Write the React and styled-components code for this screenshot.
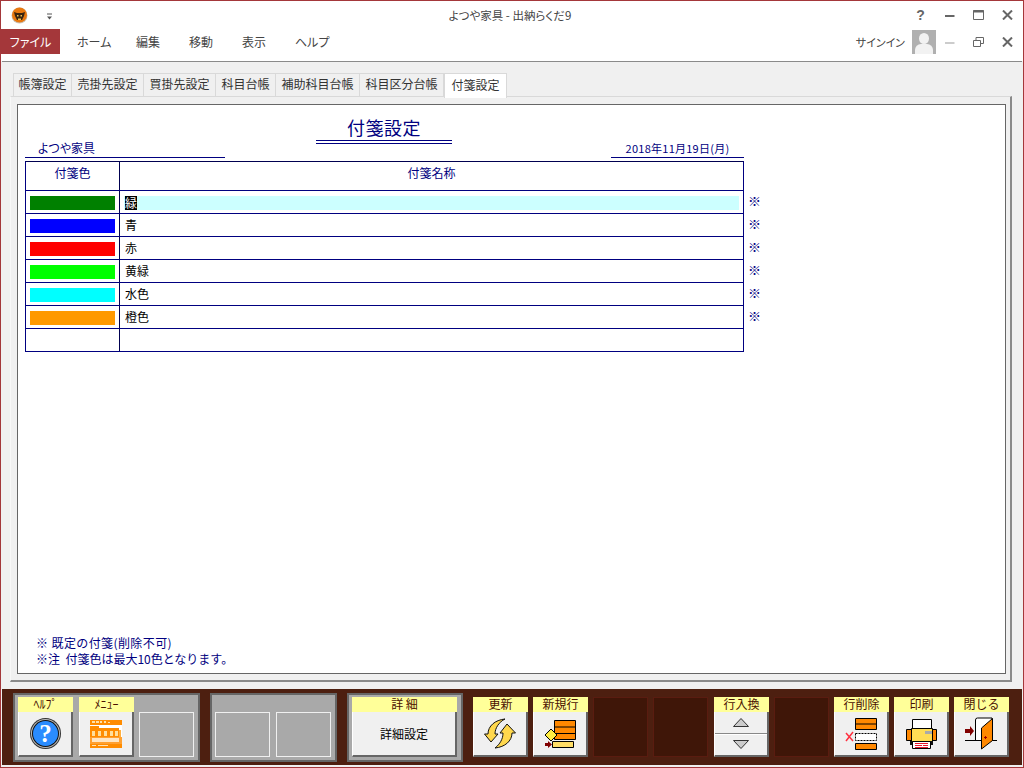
import styled, { createGlobalStyle } from "styled-components";

const GlobalStyle = createGlobalStyle`
  html, body {
    margin: 0;
    padding: 0;
    background: #fff;
  }
  body {
    font-family: "Noto Sans CJK JP", "Liberation Sans", sans-serif;
    font-size: 12px;
  }
  * {
    box-sizing: border-box;
  }
`;

const TABS = ["帳簿設定", "売掛先設定", "買掛先設定", "科目台帳", "補助科目台帳", "科目区分台帳", "付箋設定"];
const TAB_WIDTHS = [59, 72, 72, 60, 84, 84, 63];
const MENUS = ["ホーム", "編集", "移動", "表示", "ヘルプ"];
const ROWS = [
  { color: "#008000", name: "緑", selected: true },
  { color: "#0000ff", name: "青" },
  { color: "#ff0000", name: "赤" },
  { color: "#00ff00", name: "黄緑" },
  { color: "#00ffff", name: "水色" },
  { color: "#ff9900", name: "橙色" },
];

export default function App() {
  return (
    <Window>
      <GlobalStyle />
      <TitleBar>
        <TitleLeft>
          <Logo />
          <QuickMenu />
        </TitleLeft>
        <TitleText>よつや家具 - 出納らくだ9</TitleText>
        <Controls>
          <Help>?</Help>
          <ControlCell><MinimizeIcon color="#666" /></ControlCell>
          <ControlCell><MaximizeIcon /></ControlCell>
          <ControlCell><CloseIcon /></ControlCell>
        </Controls>
      </TitleBar>

      <Ribbon>
        <FileTab>ファイル</FileTab>
        <MenuList>
          {MENUS.map((m) => (
            <MenuItem key={m}>{m}</MenuItem>
          ))}
        </MenuList>
        <Account>
          <SignIn>サインイン</SignIn>
          <Avatar />
          <Controls>
            <ControlCell><MinimizeIcon color="#ccc" /></ControlCell>
            <ControlCell><RestoreIcon /></ControlCell>
            <ControlCell><CloseIcon /></ControlCell>
          </Controls>
        </Account>
      </Ribbon>

      <Client>
        <TabRow>
          {TABS.map((t, i) => (
            <Tab key={t} $active={i === TABS.length - 1} $width={TAB_WIDTHS[i]}>
              {t}
            </Tab>
          ))}
        </TabRow>
        <Panel>
          <Sheet>
            <SheetBody>
              <Heading>付箋設定</Heading>
              <InfoRow>
                <Company>よつや家具</Company>
                <DateText>2018年11月19日(月)</DateText>
              </InfoRow>
              <TableRow>
                <Table>
                  <HeaderRow>
                    <HeaderCell>付箋色</HeaderCell>
                    <HeaderCell>付箋名称</HeaderCell>
                  </HeaderRow>
                  {ROWS.map((r) => (
                    <Row key={r.name}>
                      <ColorCell>
                        <Swatch $color={r.color} />
                      </ColorCell>
                      <NameCell>
                        <NameBox $selected={r.selected}>
                          {r.selected ? <Selected>{r.name}</Selected> : r.name}
                        </NameBox>
                      </NameCell>
                    </Row>
                  ))}
                  <Row>
                    <ColorCell />
                    <NameCell />
                  </Row>
                </Table>
                <Marks>
                  {ROWS.map((r) => (
                    <Mark key={r.name}>※</Mark>
                  ))}
                </Marks>
              </TableRow>
            </SheetBody>
            <Notes>
              <NoteLine $spacing={0.4}>※ 既定の付箋(削除不可)</NoteLine>
              <NoteLine>※注&nbsp;&nbsp;付箋色は最大10色となります。</NoteLine>
            </Notes>
          </Sheet>
        </Panel>
      </Client>

      <BottomBar>
        <Group $width={187}>
          <KeyButton label="ﾍﾙﾌﾟ"><HelpIcon /></KeyButton>
          <KeyButton label="ﾒﾆｭｰ"><MenuIcon /></KeyButton>
          <EmptyKey />
        </Group>
        <Group $width={127}>
          <EmptyKey />
          <EmptyKey />
        </Group>
        <Group $width={116}>
          <KeyButton label="詳 細" wide>詳細設定</KeyButton>
        </Group>
        <Loose>
          <KeyButton label="更新"><RefreshIcon /></KeyButton>
          <KeyButton label="新規行"><NewRowIcon /></KeyButton>
          <DarkSlot />
          <DarkSlot />
          <SwapKey>
            <KeyLabel>行入換</KeyLabel>
            <SwapBody>
              <SwapUp>
                <svg width="16" height="9"><path d="M.5 8.500 8 .5l7.500 8z" fill="#ccc" stroke="#333" /></svg>
              </SwapUp>
              <SwapDown>
                <svg width="16" height="9"><path d="M.5.5 8 8.500l7.500-8z" fill="#ccc" stroke="#333" /></svg>
              </SwapDown>
            </SwapBody>
          </SwapKey>
          <DarkSlot />
          <KeyButton label="行削除"><DeleteRowIcon /></KeyButton>
          <KeyButton label="印刷"><PrinterIcon /></KeyButton>
          <KeyButton label="閉じる"><DoorIcon /></KeyButton>
        </Loose>
      </BottomBar>
    </Window>
  );
}

function KeyButton({ label, wide, children }) {
  return (
    <Key $wide={wide}>
      <KeyLabel>{label}</KeyLabel>
      <KeyBody>{children}</KeyBody>
    </Key>
  );
}

function Logo() {
  return (
    <svg width="17" height="17" viewBox="0 0 17 17">
      <circle cx="8.500" cy="8.500" r="8" fill="#c9c2b8" />
      <circle cx="8.500" cy="8" r="7.500" fill="#e8780f" />
      <path d="M3 5l3 1h5l3-1-1 4-2 4H6L4 9z" fill="#3a2410" />
      <path d="M6 8h1.500v1.500H6zM9.500 8H11v1.500H9.500zM7 11.500h3V13H7z" fill="#f4c04a" />
    </svg>
  );
}

function QuickMenu() {
  return (
    <QuickWrap>
      <svg width="7" height="7">
        <path d="M1 1h5" stroke="#555" />
        <path d="M1 3.500h5L3.500 6.500z" fill="#555" />
      </svg>
    </QuickWrap>
  );
}

function MinimizeIcon({ color }) {
  return (
    <svg width="10" height="10">
      <path d="M0 6h9.500" stroke={color} strokeWidth="2" />
    </svg>
  );
}

function MaximizeIcon() {
  return (
    <svg width="11" height="10">
      <path d="M.5.500h10v9H.500z" fill="none" stroke="#666" />
      <path d="M0 1.500h11" stroke="#666" strokeWidth="2" />
    </svg>
  );
}

function RestoreIcon() {
  return (
    <svg width="11" height="10">
      <path d="M.5 3.500h7v6h-7z" fill="none" stroke="#666" />
      <path d="M3 3V.5h7.500v6H8" fill="none" stroke="#666" />
    </svg>
  );
}

function CloseIcon() {
  return (
    <svg width="11" height="10">
      <path d="M1 .5l9 9M10 .5l-9 9" stroke="#666" strokeWidth="2" />
    </svg>
  );
}

function HelpIcon() {
  return (
    <svg width="33" height="33" viewBox="0 0 33 33">
      <circle cx="16.500" cy="16.500" r="15.500" fill="#333" />
      <circle cx="16.500" cy="16.500" r="14.500" fill="#b9b9b9" />
      <circle cx="16.500" cy="16.500" r="13.500" fill="#111" />
      <circle cx="16.500" cy="16.500" r="12.500" fill="#2a8cff" />
      <text x="16.500" y="25" textAnchor="middle" fontFamily="Liberation Serif" fontWeight="700" fontSize="25" fill="#fff">?</text>
    </svg>
  );
}

function MenuIcon() {
  return (
    <svg width="32" height="28" viewBox="0 0 32 28">
      <rect width="32" height="28" fill="#fff" />
      <rect width="32" height="5" fill="#ff8c00" />
      <path d="M2 1h3v2H2zM6 1h3v2H6zM10 1h2v2h-2zM14 1h2v2h-2zM18 2h2v1h-2z" fill="#ffe0a8" />
      <path d="M0 6h9v2h20v9H0z" fill="#ff8c00" />
      <path d="M2 11h3v5H2zM8 11h3v5H8zM14 11h3v5h-3zM20 11h3v5h-3zM25 11h3v5h-3z" fill="#ffdf9c" />
      <path d="M29 10h2v7h-2z" fill="#ffb040" />
      <path d="M0 17h32v7H0z" fill="#ffa030" />
      <path d="M2 18h27v4H2z" fill="#ffe6c4" />
      <rect y="24" width="32" height="4" fill="#ff8c00" />
      <path d="M2 25h4v1H2zM8 25h10v1H8z" fill="#ffe3b8" />
    </svg>
  );
}

function RefreshIcon() {
  return (
    <svg width="32" height="31" viewBox="0 0 32 31">
      <path d="M21 1C11 2 4 8 4 16H.5L7 24l7-8h-3C11 10 15 4 21 1Z" fill="#ffd84d" stroke="#111" />
      <path d="M11 30c10-1 17-7 17-15h3.500L23 6l-7 9h3c0 6-3 11-8 15Z" fill="#ffd84d" stroke="#111" />
    </svg>
  );
}

function NewRowIcon() {
  return (
    <svg width="33" height="30" viewBox="0 0 33 30">
      <path d="M10.500 1.500h21v19h-21z" fill="#ff8800" stroke="#000" />
      <path d="M10 8h22M10 14.500h22" stroke="#000" />
      <path d="M8.500 22.500h21v6h-21z" fill="#ffdd66" stroke="#000" />
      <path d="M7 10l6 6-6 6-6-6z" fill="#ffee44" stroke="#000" />
      <path d="M1 24h3v-2l4 3.500-4 3.500v-2H1z" fill="#800000" />
    </svg>
  );
}

function DeleteRowIcon() {
  return (
    <svg width="33" height="33" viewBox="0 0 33 33">
      <path d="M10.500 1.500h21v11h-21z" fill="#ff8800" stroke="#000" />
      <path d="M10 7h22" stroke="#000" />
      <path d="M10.500 16.500h21v7h-21z" fill="#fff" stroke="#000" strokeDasharray="2 1" />
      <path d="M10.500 26.500h21v6h-21z" fill="#ff8800" stroke="#000" />
      <path d="M1 16l7 8M8 15l-7 9" stroke="#ff3040" strokeWidth="1.500" fill="none" />
    </svg>
  );
}

function PrinterIcon() {
  return (
    <svg width="31" height="30" viewBox="0 0 31 30">
      <path d="M6.500.5h19v10h-19z" fill="#fff" stroke="#000" />
      <path d="M.5 10.500h30v11h-30z" fill="#ff8800" stroke="#000" />
      <path d="M5.500 9.500h21v13h-21z" fill="#ffdd55" stroke="#000" />
      <path d="M19 12h7v3h-7z" fill="#aaa" />
      <path d="M4 22h23v4H4z" fill="#111" />
      <path d="M6.500 22.500h18v7h-18z" fill="#fff" stroke="#000" />
      <path d="M9 24h13v1H9zM9 26h7v1H9zM17 26h5v1h-5zM9 28h13v1H9z" fill="#e8182c" />
    </svg>
  );
}

function DoorIcon() {
  return (
    <svg width="34" height="33" viewBox="0 0 34 33">
      <path d="M11.500 23V3q0-2 2-2h14.500v22" fill="#fff" stroke="#000" />
      <path d="M1 23.500h32" stroke="#000" />
      <path d="M28.500 1.500v22L17.500 32V11z" fill="#ff8800" stroke="#000" />
      <path d="M20 20h1v-1h1v1h1v1h-1v1h-1v-1h-1z" fill="#a00000" />
      <path d="M1 12h5V9l4 5-4 5v-3H1z" fill="#800000" />
    </svg>
  );
}

const Window = styled.div`
  width: 1024px;
  height: 768px;
  display: flex;
  flex-direction: column;
  padding: 0 1px 1px;
  border: 1px solid #a4373a;
  background: #f0f0f0;
  overflow: hidden;
`;

const TitleBar = styled.div`
  height: 28px;
  margin: 0 -1px;
  display: grid;
  grid-template-columns: 1fr auto 1fr;
  align-items: center;
  background: #fff;
`;

const TitleLeft = styled.div`
  display: flex;
  align-items: center;
  padding-left: 10px;
  gap: 18px;
`;

const QuickWrap = styled.div`
  display: flex;
  height: 12px;
  align-items: center;
  padding-top: 2px;
`;

const TitleText = styled.div`
  color: #444;
  font-size: 11.500px;
  font-feature-settings: "palt";
  margin-right: 4px;
`;

const Controls = styled.div`
  display: flex;
  align-items: center;
  justify-content: flex-end;
  padding-right: 1px;
`;

const ControlCell = styled.div`
  width: 29px;
  display: flex;
  justify-content: center;
  align-items: center;
`;

const Help = styled(ControlCell)`
  font-family: "Liberation Sans", sans-serif;
  font-size: 14px;
  font-weight: 700;
  color: #666;
`;

const Ribbon = styled.div`
  height: 32px;
  margin: 0 -1px;
  padding-bottom: 7px;
  display: flex;
  align-items: stretch;
  background: #fff;
`;

const FileTab = styled.div`
  width: 59px;
  display: flex;
  align-items: center;
  justify-content: center;
  background: #a4373a;
  color: #fff;
  font-size: 12px;
  font-feature-settings: "palt";
`;

const MenuList = styled.div`
  display: flex;
  align-items: center;
  padding-left: 17px;
  color: #444;
  font-feature-settings: "palt";
`;

const MenuItem = styled.div`
  width: 53px;
  font-size: 12px;

  &:first-child {
    width: 59px;
  }
`;

const Account = styled.div`
  margin-left: auto;
  display: flex;
  align-items: center;
`;

const SignIn = styled.div`
  color: #444;
  font-size: 11px;
  font-feature-settings: "palt";
  margin-right: 7px;
`;

const Avatar = styled.div`
  width: 24px;
  height: 24px;
  margin-right: -1px;
  position: relative;
  background: #b0b0b0;
  overflow: hidden;

  &::before {
    content: "";
    position: absolute;
    left: 7px;
    top: 3px;
    width: 10px;
    height: 11px;
    border-radius: 50%;
    background: #f2f2f2;
  }

  &::after {
    content: "";
    position: absolute;
    left: 3px;
    top: 14px;
    width: 18px;
    height: 12px;
    border-radius: 6px 6px 0 0;
    background: #f2f2f2;
  }
`;

const Client = styled.div`
  flex: 1;
  min-height: 0;
  display: flex;
  flex-direction: column;
  padding: 11px 10px 7px 8px;
  margin: 0;
  border-top: 1px solid #8a8a8a;
`;

const TabRow = styled.div`
  height: 24px;
  padding-left: 3px;
  display: flex;
  align-items: flex-end;
  position: relative;
  z-index: 1;
  margin-bottom: -1px;
`;

const Tab = styled.div`
  width: ${(p) => p.$width}px;
  height: ${(p) => (p.$active ? 25 : 24)}px;
  display: flex;
  align-items: center;
  justify-content: center;
  padding-bottom: 3px;
  font-size: 12px;
  color: #333;
  background: ${(p) => (p.$active ? "#fff" : "#f0f0f0")};
  border: 1px solid #d9d9d9;
  border-left: ${(p) => (p.$active ? "1px solid #d9d9d9" : "none")};
  border-bottom: ${(p) => (p.$active ? "none" : "1px solid #d9d9d9")};
  margin-bottom: ${(p) => (p.$active ? -1 : 0)}px;

  &:first-child {
    border-left: 1px solid #d9d9d9;
  }
`;

const Panel = styled.div`
  flex: 1;
  min-height: 0;
  display: flex;
  padding: 7px 4px 6px 6px;
  border-top: 1px solid #d9d9d9;
  border-left: 1px solid #f8f8f8;
  border-right: 2px solid #8a8a8a;
  border-bottom: 2px solid #8a8a8a;
`;

const Sheet = styled.div`
  flex: 1;
  display: flex;
  flex-direction: column;
  justify-content: space-between;
  background: #fff;
  border: 1px solid #666;
  color: #000080;
  padding: 12px 0 6px 7px;
`;

const SheetBody = styled.div`
  width: 740px;
`;

const Heading = styled.div`
  width: 136px;
  margin-left: 291px;
  padding-bottom: 2px;
  text-align: center;
  font-size: 18px;
  letter-spacing: 0.5px;
  line-height: 21px;
  border-bottom: 4px double #000080;
`;

const InfoRow = styled.div`
  width: 719px;
  margin: -2px 0 3px;
  display: flex;
  justify-content: space-between;
`;

const Company = styled.div`
  width: 200px;
  padding: 0 0 3px 13px;
  line-height: 12px;
  font-size: 12px;
  font-feature-settings: "palt";
  border-bottom: 1px solid #000080;
`;

const DateText = styled.div`
  width: 133px;
  padding-bottom: 3px;
  text-align: center;
  line-height: 12px;
  font-size: 11px;
  letter-spacing: 0.25px;
  border-bottom: 1px solid #000080;
`;

const TableRow = styled.div`
  display: flex;
`;

const Table = styled.div`
  width: 719px;
  border: 1px solid #000080;
  border-top: 1px solid #000050;
`;

const HeaderRow = styled.div`
  height: 28px;
  display: grid;
  grid-template-columns: 94px 1fr;
`;

const HeaderCell = styled.div`
  padding-top: 3px;
  text-align: center;
  font-size: 12px;
  line-height: 16px;

  &:first-child {
    border-right: 1px solid #000050;
  }
`;

const Row = styled.div`
  height: 23px;
  display: grid;
  grid-template-columns: 94px 1fr;
  border-top: 1px solid #000080;
`;

const ColorCell = styled.div`
  padding: 5px 4px 3px;
  border-right: 1px solid #000050;
`;

const Swatch = styled.div`
  height: 14px;
  background: ${(p) => p.$color};
`;

const NameCell = styled.div`
  padding: 5px 4px 3px;
`;

const NameBox = styled.div`
  height: 14px;
  padding: 0 0 4px 1px;
  display: flex;
  align-items: center;
  color: #000;
  font-size: 12px;
  background: ${(p) => (p.$selected ? "#ccffff" : "transparent")};
`;

const Selected = styled.span`
  height: 14px;
  margin-bottom: -4px;
  line-height: 14px;
  background: #000;
  color: #fff;
`;

const Marks = styled.div`
  padding-top: 28px;
  padding-left: 4px;
`;

const Mark = styled.div`
  height: 23px;
  line-height: 23px;
  font-size: 13px;
`;

const Notes = styled.div`
  padding-left: 11px;
  line-height: 16px;
  font-size: 12px;
`;

const NoteLine = styled.div`
  letter-spacing: ${(p) => p.$spacing || 0}px;
`;

const BottomBar = styled.div`
  height: 76px;
  flex-shrink: 0;
  display: flex;
  padding: 4px 0 0 11px;
  gap: 10px;
  background: #4d1f10;
  margin-bottom: 1px;
`;

const Group = styled.div`
  width: ${(p) => p.$width}px;
  height: 69px;
  display: flex;
  gap: 6px;
  padding: 2px 3px 3px;
  background: #a9a9a9;
  border: 2px solid #666;
`;

const Key = styled.div`
  width: ${(p) => (p.$wide ? 105 : 55)}px;
  display: flex;
  flex-direction: column;
`;

const KeyLabel = styled.div`
  height: 15px;
  line-height: 14px;
  text-align: center;
  font-size: 12px;
  background: #ffff99;
  color: #4a1000;
`;

const KeyBody = styled.div`
  height: 45px;
  display: flex;
  align-items: center;
  justify-content: center;
  font-size: 12px;
  color: #000;
  background: #f0f0f0;
  border-left: 1px solid #fff;
  border-right: 2px solid #666;
  border-bottom: 2px solid #666;
`;

const EmptyKey = styled.div`
  width: 55px;
  height: 45px;
  margin-top: 15px;
  border: 1px solid #f0f0f0;

  &:nth-child(3) {
    margin-left: -1px;
  }
`;

const Loose = styled.div`
  display: flex;
  gap: 5px;
  padding-top: 4px;
`;

const DarkSlot = styled.div`
  width: 55px;
  height: 60px;
  background: #3f1608;
  border: 1px solid #5a1c10;
`;

const SwapKey = styled(Key)`
  margin-left: 1px;
`;

const SwapBody = styled.div`
  height: 45px;
  display: flex;
  flex-direction: column;
  background: #f0f0f0;
  border-left: 1px solid #fff;
  border-right: 2px solid #666;
  border-bottom: 2px solid #666;
`;

const SwapUp = styled.div`
  flex: 1;
  display: flex;
  align-items: center;
  justify-content: center;
  border-bottom: 1px solid #888;
`;

const SwapDown = styled(SwapUp)`
  border-bottom: none;
  border-top: 1px solid #fff;
`;
